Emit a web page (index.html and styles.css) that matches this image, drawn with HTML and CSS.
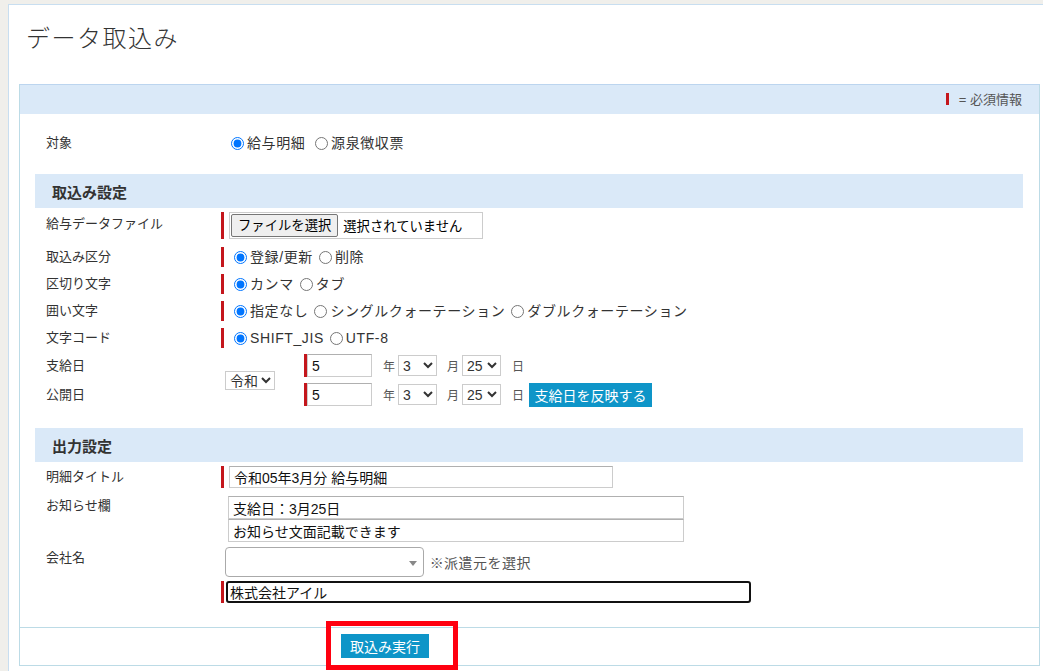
FILE: index.html
```html
<!DOCTYPE html>
<html lang="ja">
<head>
    <meta charset="UTF-8">
    <meta name="viewport" content="width=device-width, initial-scale=1.0">
    <title>データ取込み</title>
    <link rel="stylesheet" href="styles.css">
</head>
<body>
    <div id="page">
        <h1>データ取込み</h1>

        <div id="importBox">
            <div class="box-head"><span class="req-mark"></span>= 必須情報</div>

            <table class="form">
                <tr class="target-row">
                    <th>対象</th>
                    <td class="plain">
                        <label class="opt"><input type="radio" name="target" checked>給与明細</label>
                        <label class="opt"><input type="radio" name="target">源泉徴収票</label>
                    </td>
                </tr>

                <tr><td colspan="2" class="section">取込み設定</td></tr>

                <tr class="file-row">
                    <th>給与データファイル</th>
                    <td>
                        <span class="req">
                            <span class="file-box">
                                <span class="file-btn">ファイルを選択</span>
                                <span class="file-name">選択されていません</span>
                            </span>
                        </span>
                    </td>
                </tr>
                <tr class="radio-row">
                    <th>取込み区分</th>
                    <td>
                        <span class="req">
                            <label class="opt"><input type="radio" name="mode" checked>登録/更新</label>
                            <label class="opt"><input type="radio" name="mode">削除</label>
                        </span>
                    </td>
                </tr>
                <tr class="radio-row">
                    <th>区切り文字</th>
                    <td>
                        <span class="req">
                            <label class="opt"><input type="radio" name="sep" checked>カンマ</label>
                            <label class="opt"><input type="radio" name="sep">タブ</label>
                        </span>
                    </td>
                </tr>
                <tr class="radio-row">
                    <th>囲い文字</th>
                    <td>
                        <span class="req">
                            <label class="opt"><input type="radio" name="quote" checked>指定なし</label>
                            <label class="opt"><input type="radio" name="quote">シングルクォーテーション</label>
                            <label class="opt"><input type="radio" name="quote">ダブルクォーテーション</label>
                        </span>
                    </td>
                </tr>
                <tr class="radio-row">
                    <th>文字コード</th>
                    <td>
                        <span class="req">
                            <label class="opt"><input type="radio" name="enc" checked>SHIFT_JIS</label>
                            <label class="opt"><input type="radio" name="enc">UTF-8</label>
                        </span>
                    </td>
                </tr>
                <tr class="date-row">
                    <th>支給日</th>
                    <td rowspan="2">
                        <div class="dates">
                            <select class="era">
                                <option>令和</option>
                            </select>
                            <div class="date-lines">
                                <div class="date-line">
                                    <span class="req bar-only"><input type="text" class="year" value="5"></span>
                                    <span class="unit">年</span>
                                    <select class="num"><option>3</option></select>
                                    <span class="unit unit-m">月</span>
                                    <select class="num"><option>25</option></select>
                                    <span class="unit">日</span>
                                </div>
                                <div class="date-line">
                                    <span class="req bar-only"><input type="text" class="year" value="5"></span>
                                    <span class="unit">年</span>
                                    <select class="num"><option>3</option></select>
                                    <span class="unit unit-m">月</span>
                                    <select class="num"><option>25</option></select>
                                    <span class="unit">日</span>
                                    <button class="btn-blue">支給日を反映する</button>
                                </div>
                            </div>
                        </div>
                    </td>
                </tr>
                <tr class="date-row">
                    <th>公開日</th>
                </tr>
                <tr class="gap"><td colspan="2"></td></tr>

                <tr><td colspan="2" class="section">出力設定</td></tr>

                <tr class="title-row">
                    <th>明細タイトル</th>
                    <td>
                        <span class="req bar-only"><input type="text" class="title-input" value="令和05年3月分 給与明細"></span>
                    </td>
                </tr>
                <tr class="notice-row">
                    <th>お知らせ欄</th>
                    <td class="plain">
                        <input type="text" class="notice-input" value="支給日：3月25日">
                        <input type="text" class="notice-input" value="お知らせ文面記載できます">
                    </td>
                </tr>
                <tr class="company-row">
                    <th>会社名</th>
                    <td class="plain">
                        <span class="combo"><span class="combo-arrow"></span></span>
                        <span class="hint">※派遣元を選択</span>
                    </td>
                </tr>
                <tr class="company-name-row">
                    <th></th>
                    <td>
                        <span class="req bar-only"><input type="text" class="company-input focused" value="株式会社アイル"></span>
                    </td>
                </tr>
                <tr class="gap-bottom"><td colspan="2"></td></tr>
            </table>

            <div class="box-foot">
                <button class="btn-blue btn-run">取込み実行</button>
                <span class="highlight"></span>
            </div>
        </div>
    </div>
</body>
</html>
```

FILE: styles.css
```css
html {
    overflow: hidden;
    background-color: #f0efeb;
}

body {
    margin: 0;
    font-family: "Liberation Sans", "Noto Sans CJK JP", sans-serif;
    font-size: 13px;
    color: #333;
}

#page {
    margin: 4px 0 0 8px;
    width: 1021px;
    min-height: 680px;
    padding: 0 10px;
    background-color: #fff;
    border: 1px solid #c8def0;
}

h1 {
    margin: 0 0 29px 0;
    padding: 14px 0 0 7px;
    font-family: "Noto Sans CJK JP", sans-serif;
    font-size: 24px;
    font-weight: 300;
    line-height: 36px;
    letter-spacing: 1.5px;
    color: #333;
}

#importBox {
    border: 1px solid #bcdbe6;
    border-top-color: #bcd5ef;
}

.box-head {
    height: 29px;
    line-height: 29px;
    background-color: #dae9f8;
    text-align: right;
    padding-right: 17px;
    font-size: 13px;
    color: #555;
}

.req-mark {
    display: inline-block;
    width: 3px;
    height: 12px;
    background-color: #c4161c;
    margin-right: 10px;
    vertical-align: -1px;
}

/* form table */
.form {
    width: 988px;
    margin: 0 15px;
    border-collapse: collapse;
}

.form th {
    width: 175px;
    padding: 0 0 0 11px;
    text-align: left;
    font-weight: normal;
    font-size: 13px;
    line-height: 20px;
    vertical-align: middle;
}

.form td {
    padding: 0;
    vertical-align: middle;
}

.form td.plain {
    padding-left: 5px;
}

.section {
    height: 34px;
    padding-left: 17px !important;
    background-color: #dae9f8;
    font-size: 15px;
    font-weight: bold;
    font-family: "Noto Sans CJK JP", sans-serif;
}

.target-row {
    height: 60px;
}

.target-row td,
.target-row th {
    padding-bottom: 2px !important;
}

.file-row {
    height: 35px;
}

.file-row th {
    padding-bottom: 4px !important;
}

.radio-row {
    height: 27px;
}

.date-row {
    height: 29px;
}

.gap td {
    height: 19px;
}

.title-row {
    height: 30px;
}

.notice-row th,
.company-row th {
    vertical-align: top;
    padding-top: 4px;
}

.notice-row td {
    padding-top: 4px;
    padding-left: 7px !important;
    padding-bottom: 2px;
}

.company-row td {
    padding-top: 2px;
    padding-left: 4px !important;
    height: 32px;
}

.company-name-row {
    height: 28px;
}

.gap-bottom td {
    height: 21px;
}

/* required marker bar */
.req {
    display: inline-flex;
    align-items: center;
    border-left: 3px solid #c4161c;
    padding-left: 5px;
    min-height: 20px;
}

.req.bar-only {
    padding-left: 2px;
}

.opt {
    display: inline-flex;
    align-items: center;
    font-size: 14px;
    line-height: 20px;
    letter-spacing: 0.6px;
    color: #333;
    margin-right: 1px;
}

.opt input {
    width: 13px;
    height: 13px;
    margin: 1px 3px 0 5px;
}

.file-box {
    display: inline-flex;
    align-items: center;
    width: 254px;
    height: 27px;
    box-sizing: border-box;
    border: 1px solid #ccc;
    font-size: 13.33px;
    color: #000;
}

.file-btn {
    height: 23px;
    line-height: 21px;
    margin-left: 1px;
    padding: 0 6px;
    box-sizing: border-box;
    background-color: #efefef;
    border: 1px solid #767676;
    border-radius: 2px;
}

.file-name {
    padding-left: 5px;
}

/* date inputs */
.dates {
    display: flex;
    align-items: center;
}

.era {
    margin-left: 4px;
    width: 50px;
    height: 19px;
}

.date-lines {
    margin-left: 29px;
}

.date-line {
    display: flex;
    align-items: center;
    height: 29px;
}

.date-line .req {
    min-height: 23px;
    padding-left: 0;
}

select {
    font-family: "Liberation Sans", "Noto Sans CJK JP", sans-serif;
    font-size: 14px;
    color: #333;
    background-color: #fff;
    border: 1px solid #ccc;
    border-radius: 0;
    padding: 0;
}

.num {
    width: 39px;
    height: 21px;
}

.unit {
    font-size: 12px;
    color: #555;
    margin: 0 3px 0 11px;
}

.unit-m {
    margin-left: 10px;
}

input[type="text"] {
    font-family: "Liberation Sans", "Noto Sans CJK JP", sans-serif;
    font-size: 14px;
    color: #111;
    box-sizing: border-box;
    border: 1px solid #ccc;
    border-top-color: #b0b0b0;
    padding: 0 4px;
    margin: 0;
    outline: none;
}

.year {
    width: 65px;
    height: 23px;
}

.title-input {
    width: 384px;
    height: 22px;
    margin-left: 3px !important;
}

.notice-input {
    display: block;
    width: 456px;
    height: 23px;
}

.company-input {
    width: 525px;
    height: 22px;
}

.focused {
    border: 2px solid #111 !important;
    border-radius: 3px;
    padding: 0 2px !important;
}

.combo {
    display: inline-block;
    position: relative;
    width: 199px;
    height: 30px;
    box-sizing: border-box;
    border: 1px solid #aaa;
    border-radius: 4px;
    vertical-align: middle;
    background-color: #fff;
}

.combo-arrow {
    position: absolute;
    right: 6px;
    top: 13px;
    border-left: 4px solid transparent;
    border-right: 4px solid transparent;
    border-top: 5px solid #888;
}

.hint {
    font-size: 14px;
    color: #555;
    margin-left: 2px;
    letter-spacing: 0.5px;
    vertical-align: middle;
}

.btn-blue {
    height: 24px;
    padding: 0 6px;
    border: none;
    background-color: #0e95c8;
    color: #fff;
    font-family: "Noto Sans CJK JP", sans-serif;
    font-size: 14px;
    cursor: pointer;
}

.date-line .btn-blue {
    margin-left: 2px;
    width: 123px;
    padding: 0;
}

.box-foot {
    position: relative;
    height: 37px;
    border-top: 1px solid #bcdbe6;
}

.btn-run {
    margin: 6px 0 0 321px;
    width: 88px;
    padding: 0;
}

/* red frame drawn over the run button */
.highlight {
    position: absolute;
    left: 306px;
    top: -7px;
    width: 132px;
    height: 49px;
    box-sizing: border-box;
    border: 5px solid #ff0010;
}
```
